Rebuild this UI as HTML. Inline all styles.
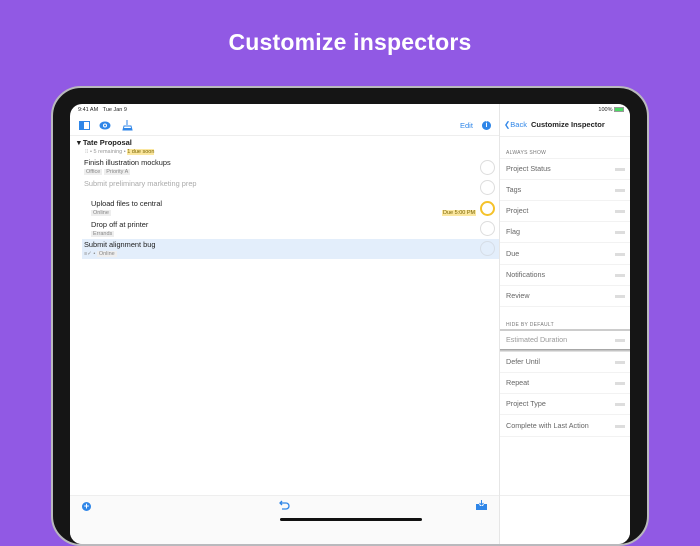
<!DOCTYPE html>
<html><head><style>
*{margin:0;padding:0;box-sizing:border-box}
body{width:700px;height:525px;overflow:hidden;background:#9159e4;font-family:"Liberation Sans",sans-serif;position:relative}
.title{position:absolute;top:29px;width:700px;text-align:center;color:#fff;font-size:23px;font-weight:bold;letter-spacing:0.2px}
.dev{position:absolute;left:51px;top:86px;width:598px;height:460px;border-radius:30px;background:#151515;border:2px solid #b9b9bd}
.scr{position:absolute;left:70px;top:104px;width:560px;height:440px;border-radius:12px;background:#fff;overflow:hidden}
.a{position:absolute;white-space:nowrap;line-height:1.15}
.t{font-size:7px;color:#222}
.row{font-size:7.4px;color:#222}
.tg{font-size:5.5px;color:#888}
.tag{font-size:5.5px;color:#888;background:#eee;padding:0 2px;margin-right:2px}
.circ{position:absolute;left:410px;width:15px;height:15px;border-radius:50%;border:1.5px solid #ddd}
.rp{position:absolute;left:429px;top:0;width:131px;height:440px;border-left:1px solid #e6e6e6;background:#fff}
.ri{position:absolute;left:6px;font-size:7.2px;color:#666;line-height:1.15}
.ln{position:absolute;left:0;right:0;height:1px;background:#f2f2f2}
.hd{position:absolute;left:6px;font-size:5px;color:#777;letter-spacing:.3px}
.gr{position:absolute;left:115px;width:10px;height:3px;background:#ddd}
.blue{color:#2f86e8}
</style></head><body>
<div class="title">Customize inspectors</div>
<div class="dev"></div>
<div class="scr">
 <div class="a t" style="left:8px;top:3px;font-size:5.5px">9:41 AM&nbsp;&nbsp; Tue Jan 9</div>
 <svg class="a" style="left:9px;top:17px" width="11" height="9"><rect x=".5" y=".5" width="10" height="8" fill="none" stroke="#2f86e8"/><rect x="1" y="1" width="4" height="7" fill="#2f86e8"/></svg>
 <svg class="a" style="left:29px;top:17px" width="12" height="9"><ellipse cx="6" cy="4.5" rx="5.5" ry="4" fill="#2f86e8"/><circle cx="6" cy="4.5" r="2" fill="#fff"/><circle cx="6" cy="4.5" r="1" fill="#2f86e8"/></svg>
 <svg class="a" style="left:52px;top:15px" width="14" height="12"><path d="M5 1v5M2 7h7l1 4H1z" stroke="#2f86e8" fill="none"/><rect x="1" y="9" width="9" height="2" fill="#2f86e8"/></svg>
 <div class="a blue" style="left:390px;top:18px;font-size:7.5px">Edit</div>
 <div class="a" style="left:412px;top:17px;width:9px;height:9px;border-radius:50%;background:#2f86e8;color:#fff;font-size:7px;font-weight:bold;text-align:center;line-height:9px">i</div>
 <div class="a" style="left:0;top:31px;width:429px;height:1px;background:#eee"></div>
 <div class="a t" style="left:7px;top:35px;font-size:7.5px;font-weight:bold">▾ Tate Proposal</div>
 <div class="a tg" style="left:15px;top:45px;color:#999">⁝⁝ • 5 remaining • <span style="background:#fbe7a0;color:#7a6400">1 due soon</span></div>
 <div class="a row" style="left:14px;top:55px">Finish illustration mockups</div>
 <div class="a tg" style="left:14px;top:65px"><span class="tag">Office</span><span class="tag">Priority A</span></div>
 <div class="circ" style="top:56px"></div>
 <div class="a row" style="left:14px;top:76px;color:#aaa">Submit preliminary marketing prep</div>
 <div class="circ" style="top:76px"></div>
 <div class="a row" style="left:21px;top:96px">Upload files to central</div>
 <div class="a tg" style="left:21px;top:106px"><span class="tag">Online</span></div>
 <div class="a tg" style="left:372px;top:106px;color:#7a6400;background:#fbe7a0;padding:0 1px">Due 5:00 PM</div>
 <div class="circ" style="top:97px;border-color:#f5c22a;border-width:2px"></div>
 <div class="a row" style="left:21px;top:117px">Drop off at printer</div>
 <div class="a tg" style="left:21px;top:127px"><span class="tag">Errands</span></div>
 <div class="circ" style="top:117px"></div>
 <div class="a" style="left:12px;top:135px;width:417px;height:20px;background:#e3eefb"></div>
 <div class="a row" style="left:14px;top:137px">Submit alignment bug</div>
 <div class="a tg" style="left:14px;top:147px">≡✓ • <span class="tag">Online</span></div>
 <div class="circ" style="top:137px;border-color:#d6dde6"></div>
 <div class="a" style="left:0;top:391px;width:429px;height:1px;background:#eee"></div>
 <div class="a" style="left:0;top:392px;width:429px;height:48px;background:#fafafa"></div>
 <div class="a" style="left:12px;top:398px;width:9px;height:9px;border-radius:50%;background:#2f86e8;color:#fff;font-size:9px;line-height:8px;text-align:center;font-weight:bold">+</div>
 <svg class="a" style="left:209px;top:396px" width="12" height="10"><path d="M3 1L1 3l2 2M1 3h6a3 3 0 0 1 0 6H3" stroke="#2f86e8" fill="none" stroke-width="1.3"/></svg>
 <svg class="a" style="left:406px;top:396px" width="11" height="10"><path d="M5.5 0v5M3.5 3l2 2 2-2" stroke="#2f86e8" fill="none"/><path d="M0 4h3l1 2h3l1-2h3v6H0z" fill="#2f86e8"/></svg>
 <div class="a" style="left:210px;top:414px;width:142px;height:3px;border-radius:2px;background:#111"></div>
 <div class="rp">
  <div class="a" style="right:6px;top:3px;font-size:5.5px;color:#222">100% <span style="display:inline-block;width:10px;height:5px;background:#4cd964;border:1px solid #999;vertical-align:middle"></span></div>
  <div class="a blue" style="left:4px;top:17px;font-size:7.5px">❮Back</div>
  <div class="a" style="left:31px;top:17px;font-size:7.5px;font-weight:bold;color:#222">Customize Inspector</div>
  <div class="ln" style="top:32px;background:#eee"></div>
  <div class="hd" style="top:46px">ALWAYS SHOW</div>
  <div class="ln" style="top:54px"></div>
  <div class="ri" style="top:61px">Project Status</div><div class="gr" style="top:64px"></div><div class="ln" style="top:75px"></div>
  <div class="ri" style="top:82px">Tags</div><div class="gr" style="top:85px"></div><div class="ln" style="top:96px"></div>
  <div class="ri" style="top:103px">Project</div><div class="gr" style="top:106px"></div><div class="ln" style="top:117px"></div>
  <div class="ri" style="top:124px">Flag</div><div class="gr" style="top:127px"></div><div class="ln" style="top:138px"></div>
  <div class="ri" style="top:146px">Due</div><div class="gr" style="top:149px"></div><div class="ln" style="top:160px"></div>
  <div class="ri" style="top:167px">Notifications</div><div class="gr" style="top:170px"></div><div class="ln" style="top:181px"></div>
  <div class="ri" style="top:188px">Review</div><div class="gr" style="top:191px"></div><div class="ln" style="top:202px"></div>
  <div class="hd" style="top:218px">HIDE BY DEFAULT</div>
  <div class="ln" style="top:225px;height:2px;background:#ccc"></div>
  <div class="ri" style="top:232px;color:#999">Estimated Duration</div><div class="gr" style="top:235px"></div>
  <div class="ln" style="top:245px;height:3px;background:linear-gradient(#999,#eee)"></div>
  <div class="ri" style="top:254px">Defer Until</div><div class="gr" style="top:257px"></div><div class="ln" style="top:268px"></div>
  <div class="ri" style="top:275px">Repeat</div><div class="gr" style="top:278px"></div><div class="ln" style="top:289px"></div>
  <div class="ri" style="top:296px">Project Type</div><div class="gr" style="top:299px"></div><div class="ln" style="top:310px"></div>
  <div class="ri" style="top:318px">Complete with Last Action</div><div class="gr" style="top:321px"></div><div class="ln" style="top:332px"></div>
  <div class="ln" style="top:391px;background:#eee"></div>
 </div>
</div>
</body></html>
